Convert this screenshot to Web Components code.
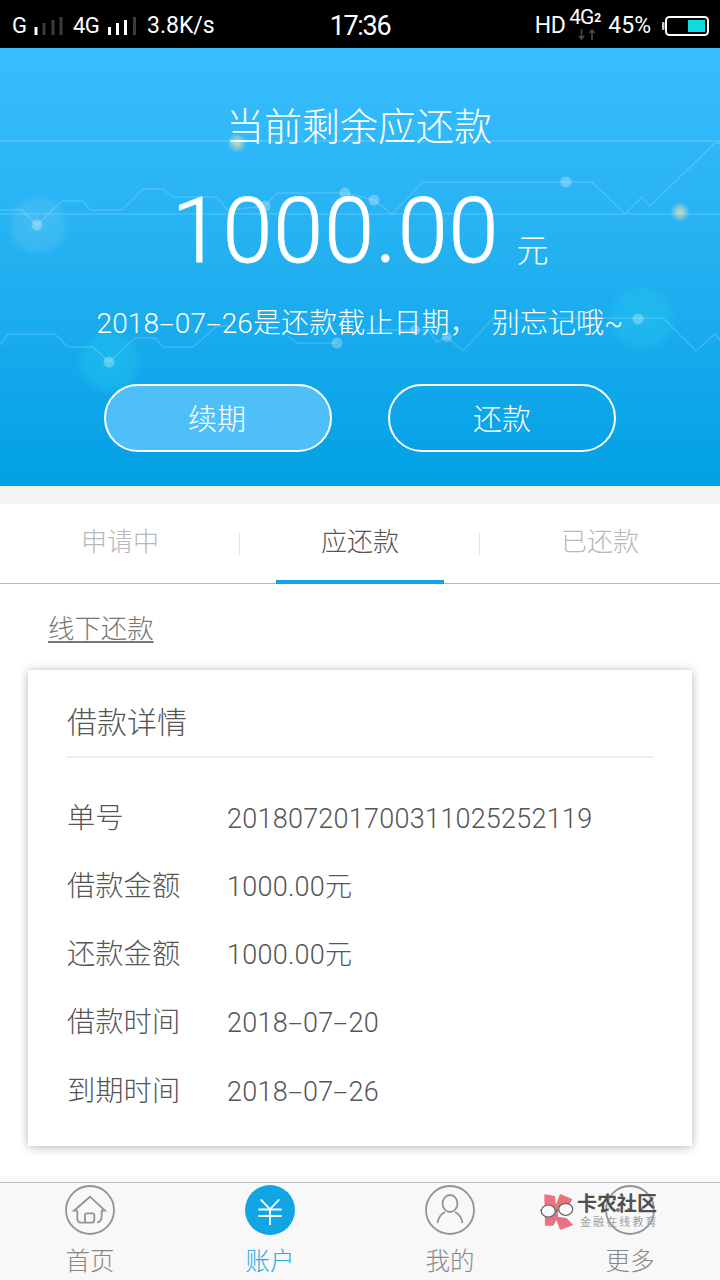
<!DOCTYPE html>
<html lang="zh">
<head>
<meta charset="utf-8">
<title>应还款</title>
<style>
html, body { margin: 0; padding: 0; background: #fff; }
body { width: 720px; height: 1280px; overflow: hidden; font-family: "Noto Sans CJK SC", "Noto Sans", sans-serif; }
</style>
</head>
<body>
<loan-page></loan-page>

<script>
const CJK = '"Noto Sans CJK SC", "Noto Sans", sans-serif';
const LATIN = 'Roboto, "Noto Sans CJK SC", sans-serif';

// every element here is the same shape: a template + an open shadow root
function def(name, html){
    const t = document.createElement("template");
    t.innerHTML = html;
    customElements.define(name, class extends HTMLElement {
        constructor(){
            super();
            this.attachShadow({mode:"open"});
            this.shadowRoot.appendChild(t.content.cloneNode(true));
        }
    });
}

// the dashes in the dates are drawn long in the reference
def("long-dash", `
<style>
:host { display: inline-block; width: .56em; text-align: center; transform: scaleX(1.9); white-space: nowrap; }
</style>
<slot></slot>
`);

def("status-bar", `
<style>
:host { display: grid; grid-template-columns: 1fr auto 1fr; align-items: center; height: 48px; background: #000; color: #fff; font: 400 23px Roboto, sans-serif; padding-top: 3px; box-sizing: border-box; }
.left, .right { display: flex; align-items: center; }
.left { padding-left: 12px; }
.right { justify-content: flex-end; padding-right: 11px; }
.time { font-size: 27px; line-height: 32px; letter-spacing: -1.300px; }
.g { font-size: 22px; width: 21px; }
.g2 { font-size: 22px; width: 29px; margin-left: 10px; letter-spacing: -.5px; }
svg { display: block; }
.net { position: relative; width: 39px; height: 34px; margin: 0 12px 0 3px; }
.net b { position: absolute; left: 1px; top: -4px; font-weight: 400; font-size: 21px; line-height: 24px; letter-spacing: -1px; }
.net i { position: absolute; left: 26px; top: 2px; font-style: normal; font-weight: 700; font-size: 12px; line-height: 14px; }
.net svg { position: absolute; left: 10px; top: 20px; }
.bat { margin-left: 11px; }
</style>
<div class="left">
    <span class="g">G</span>
    <svg width="30" height="20" viewBox="0 0 30 20"><g fill="#3c3c3c"><rect x="9.500" y="7" width="3" height="12"/><rect x="18.500" y="4" width="3" height="15"/><rect x="26.500" y="1" width="3" height="18"/></g><rect x="1.500" y="11" width="3" height="8" fill="#fff"/></svg>
    <span class="g2">4G</span>
    <svg width="30" height="20" viewBox="0 0 30 20" style="margin-left:6px"><g fill="#fff"><rect x="0" y="11" width="3" height="8"/><rect x="8" y="7" width="3" height="12"/><rect x="16" y="4" width="3" height="15"/></g><rect x="25" y="1" width="3" height="18" fill="#3c3c3c"/></svg>
    <span style="margin-left:9px">3.8K/s</span>
</div>
<div class="time">17:36</div>
<div class="right">
    <span style="letter-spacing:-.5px">HD</span>
    <div class="net">
        <b>4G</b><i>2</i>
        <svg width="18" height="11" viewBox="0 0 18 11" fill="none" stroke="#4a4a4a" stroke-width="1.600"><path d="M3.500 0v10M1 7l2.500 3L6 7M14 11V1M11.500 4L14 1l2.500 3"/></svg>
    </div>
    <span style="margin-left:-11px">45%</span>
    <svg class="bat" width="47" height="20" viewBox="0 0 47 20"><rect x="0" y="6" width="2.500" height="8" rx="1" fill="#ccc"/><rect x="4" y="1" width="42" height="18" rx="3.500" fill="none" stroke="#fff" stroke-width="2"/><rect x="26" y="4" width="17" height="12" fill="#10dbe0"/></svg>
</div>
`);

def("hero-panel", `
<style>
:host { display: flex; flex-direction: column; align-items: center; position: relative; height: 438px; box-sizing: border-box; padding-top: 48px; color: #fff; background: linear-gradient(#39bdfd, #22b0f1 50%, #02a0e5); font-family: ${CJK}; overflow: hidden; }
.bg { position: absolute; left: 0; top: 0; }
.title, .amount, .note, .actions { position: relative; }
.title { font-size: 38px; line-height: 56px; font-weight: 300; margin-left: -2px; }
.amount { display: flex; align-items: baseline; margin: 28px 0 0 1px; height: 103px; font-family: Roboto, sans-serif; font-weight: 300; font-size: 90px; line-height: 103px; letter-spacing: 1px; -webkit-text-stroke: .8px #fff; }
.amount span { font-family: ${CJK}; font-size: 32px; margin-left: 17px; -webkit-text-stroke: 0; }
.note { margin-top: 21px; font-family: ${LATIN}; font-size: 28px; line-height: 40px; font-weight: 300; white-space: nowrap; word-spacing: 7px; letter-spacing: .1px; }
.actions { display: flex; gap: 56px; margin-top: 40px; }
</style>
<svg class="bg" width="720" height="438" viewBox="0 48 720 438" fill="none">
    <defs>
        <radialGradient id="gold"><stop offset="0" stop-color="#ffe9a8" stop-opacity=".75"/><stop offset="1" stop-color="#ffe9a8" stop-opacity="0"/></radialGradient>
        <radialGradient id="pale"><stop offset="0" stop-color="#7fd4f5" stop-opacity=".3"/><stop offset=".75" stop-color="#7fd4f5" stop-opacity=".2"/><stop offset="1" stop-color="#7fd4f5" stop-opacity="0"/></radialGradient>
        <radialGradient id="cyan"><stop offset="0" stop-color="#22c4ee" stop-opacity=".55"/><stop offset=".75" stop-color="#22c4ee" stop-opacity=".4"/><stop offset="1" stop-color="#22c4ee" stop-opacity="0"/></radialGradient>
    </defs>
    <circle cx="38" cy="225" r="32" fill="url(#pale)"/>
    <circle cx="109" cy="362" r="33" fill="url(#cyan)"/>
    <circle cx="642" cy="318" r="35" fill="url(#cyan)"/>
    <g stroke="#fff" stroke-opacity=".17" stroke-width="1.500">
        <path d="M0 141H720M0 214H720"/>
        <path d="M0 210H22L37 225 62 201H83L90 210H122L143 189H163L173 197H217L227 210 265 206 277 193H345L374 200 392 214 423 182H592L625 214 642 197 650 206 715 143H720"/>
        <path d="M0 345L8 334H55L68 347H93L109 362 135 338H155L163 347H193L217 326H233M288 336L297 343H337M367 330H428L437 342 447 337 463 351 493 318H663L696 351 715 334 720 340"/>
    </g>
    <g fill="#fff" fill-opacity=".28">
        <circle cx="37" cy="225" r="5.500"/><circle cx="265" cy="206" r="5.500"/><circle cx="345" cy="193" r="5.500"/>
        <circle cx="374" cy="200" r="5.500"/><circle cx="566" cy="182" r="5.500"/><circle cx="109" cy="362" r="5.500"/>
        <circle cx="337" cy="343" r="5.500"/><circle cx="415" cy="330" r="5"/><circle cx="447" cy="337" r="5"/><circle cx="638" cy="319" r="5.500"/>
    </g>
    <circle cx="237" cy="143" r="10" fill="url(#gold)"/>
    <circle cx="680" cy="212" r="10" fill="url(#gold)"/>
</svg>
<div class="title">当前剩余应还款</div>
<div class="amount">1000.00<span>元</span></div>
<div class="note"><slot name="note"></slot></div>
<div class="actions"><slot></slot></div>
`);

def("pill-button", `
<style>
:host { display: flex; justify-content: center; align-items: center; width: 228px; height: 68px; box-sizing: border-box; border: 2px solid #fff; border-radius: 34px; padding-bottom: 2px; color: #fff; font-size: 29px; font-weight: 300; font-family: ${CJK}; }
:host([filled]) { background: #4fbff8; padding-right: 2px; }
</style>
<slot></slot>
`);

def("tab-bar", `
<style>
:host { display: flex; height: 80px; margin-top: 18px; box-sizing: border-box; border-bottom: 1px solid #b8b8b8; background: #fff; }
</style>
<slot></slot>
`);

def("tab-item", `
<style>
:host { flex: 1; display: flex; justify-content: center; align-items: center; position: relative; height: 79px; padding-bottom: 8px; box-sizing: border-box; font: 300 26px ${CJK}; color: #b8b8b8; }
:host([active]) { color: #555; }
/* divider and underline sit over the tab box */
:host(:not(:last-child))::after { content: ""; position: absolute; right: 0; top: 28px; width: 1px; height: 24px; background: #e4e4e4; }
:host([active])::before { content: ""; position: absolute; left: 36px; right: 36px; bottom: -1px; height: 4px; background: #12a5e6; }
</style>
<slot></slot>
`);

def("detail-card", `
<style>
:host { display: block; margin: 0 28px; height: 476px; box-sizing: border-box; padding: 0 38px; background: #fff; box-shadow: 0 1px 9px rgba(0,0,0,.3); font-family: ${CJK}; font-weight: 300; }
h2 { margin: 0 0 24px; height: 88px; box-sizing: border-box; padding: 24px 0 0 1px; font-size: 30px; line-height: 52px; font-weight: 300; color: #555; border-bottom: 2px solid #eee; }
</style>
<h2>借款详情</h2>
<slot></slot>
`);

def("detail-row", `
<style>
:host { display: flex; align-items: baseline; height: 68px; line-height: 68px; padding-left: 1px; color: #555; font-size: 28.300px; }
.k { width: 160px; }
.v { font-family: ${LATIN}; font-size: 27px; letter-spacing: .25px; }
</style>
<div class="k"><slot name="label"></slot></div>
<div class="v"><slot></slot></div>
`);

def("nav-bar", `
<style>
:host { display: flex; position: relative; height: 98px; box-sizing: border-box; border-top: 1px solid #bdbdbd; background: #f8f8f8; }
</style>
<slot></slot>
`);

def("nav-item", `
<style>
:host { flex: 1; display: flex; flex-direction: column; align-items: center; padding-top: 2px; color: #888; font: 300 24.500px ${CJK}; }
:host([active]) { color: #28a9e2; }
.icon { width: 50px; height: 50px; }
.label { margin-top: 7px; line-height: 36px; }
</style>
<div class="icon"><slot name="icon"></slot></div>
<div class="label"><slot></slot></div>
`);

def("brand-mark", `
<style>
/* watermark stamped over the nav bar */
:host { position: absolute; left: 540px; top: 1190px; display: flex; width: 124px; height: 42px; font-family: ${CJK}; }
svg { display: block; flex: none; }
.txt { margin-left: -3px; display: flex; flex-direction: column; }
.a { font-size: 20px; line-height: 25px; font-weight: 700; color: #505050; white-space: nowrap; }
.b { font-size: 11px; line-height: 13px; letter-spacing: 2.100px; margin: 0 0 0 3px; color: #a0a0a0; white-space: nowrap; }
</style>
<svg width="40" height="42" viewBox="0 0 40 42">
    <path d="M4.300 4.300L15 6 16 15 20 4 32.300 9 27.700 18.300H18V26.700L26.700 28.300 33.300 35 20 40 16.500 30 13.300 35.700H5Z" fill="#e8737f"/>
    <ellipse cx="8.300" cy="21" rx="7" ry="6" fill="#fbfbfb" stroke="#666" stroke-width="1.200"/>
    <ellipse cx="25.700" cy="19.300" rx="7" ry="6" fill="#fbfbfb" stroke="#666" stroke-width="1.200"/>
    <path d="M15.300 20.500h3.400M1.300 20.500L0 20" stroke="#666" stroke-width="1.200" fill="none"/>
</svg>
<div class="txt"><span class="a">卡农社区</span><span class="b">金融在线教育</span></div>
`);

def("loan-page", `
<style>
:host { display: flex; flex-direction: column; width: 720px; height: 1280px; position: relative; background: #fff; }
.gap { height: 18px; background: #f5f3f0; margin-bottom: -18px; }
.link { height: 86px; box-sizing: border-box; padding: 24px 0 0 48px; }
.link span { font: 300 26.400px/38px ${CJK}; color: #777; text-decoration: underline; text-underline-offset: 3px; }
.tail { flex: 1; }
.foot { height: 6px; background: #fafafa; }
svg { display: block; }
.line { fill: none; stroke: #939393; stroke-width: 1.800; }
</style>
<status-bar></status-bar>
<hero-panel>
    <span slot="note">2018<long-dash>-</long-dash>07<long-dash>-</long-dash>26是还款截止日期， 别忘记哦~</span>
    <pill-button filled>续期</pill-button>
    <pill-button>还款</pill-button>
</hero-panel>
<div class="gap"></div>
<tab-bar>
    <tab-item>申请中</tab-item>
    <tab-item active>应还款</tab-item>
    <tab-item>已还款</tab-item>
</tab-bar>
<div class="link"><span>线下还款</span></div>
<detail-card>
    <detail-row><span slot="label">单号</span>201807201700311025252119</detail-row>
    <detail-row><span slot="label">借款金额</span>1000.00元</detail-row>
    <detail-row><span slot="label">还款金额</span>1000.00元</detail-row>
    <detail-row><span slot="label">借款时间</span>2018<long-dash>-</long-dash>07<long-dash>-</long-dash>20</detail-row>
    <detail-row style="margin-top:1px"><span slot="label">到期时间</span>2018<long-dash>-</long-dash>07<long-dash>-</long-dash>26</detail-row>
</detail-card>
<div class="tail"></div>
<div class="foot"></div>
<nav-bar>
    <nav-item>
        <svg slot="icon" width="50" height="50" viewBox="0 0 50 50"><circle class="line" cx="25" cy="25" r="24"/><path class="line" d="M12.300 25.700H9L25 11.700 40 25.700H36.700V31C36.700 35 35 37 32.300 37.700M12.300 25.700V33C12.300 36 14 37.700 16 37.700H26.700C28.500 37.700 29.300 36.700 29.300 35V30C29.300 28.800 28.500 28.300 27.500 28.300H21.500C20.500 28.300 20 29 20 30V37"/></svg>
        首页
    </nav-item>
    <nav-item active>
        <svg slot="icon" width="50" height="50" viewBox="0 0 50 50"><circle cx="25" cy="25" r="25" fill="#12a5e6"/><path d="M15.700 14.300L25 24.300 34.300 14.300M13.300 24.500H36.700M13.300 31H36.700M25 24V40" fill="none" stroke="#fff" stroke-width="1.800"/></svg>
        账户
    </nav-item>
    <nav-item>
        <svg slot="icon" width="50" height="50" viewBox="0 0 50 50"><circle class="line" cx="25" cy="25" r="24"/><ellipse class="line" cx="25" cy="18.500" rx="7.500" ry="8.500"/><path class="line" d="M12.500 38C13.500 31.500 17 28.500 20 27M37.500 38C36.500 31.500 33 28.500 30 27"/></svg>
        我的
    </nav-item>
    <nav-item>
        <svg slot="icon" width="50" height="50" viewBox="0 0 50 50"><circle class="line" cx="25" cy="25" r="24"/><g fill="#777"><circle cx="13" cy="25" r="2"/><circle cx="24" cy="25" r="2"/><circle cx="36" cy="25" r="2"/></g></svg>
        更多
    </nav-item>
</nav-bar>
<brand-mark></brand-mark>
`);
</script>
</body>
</html>
